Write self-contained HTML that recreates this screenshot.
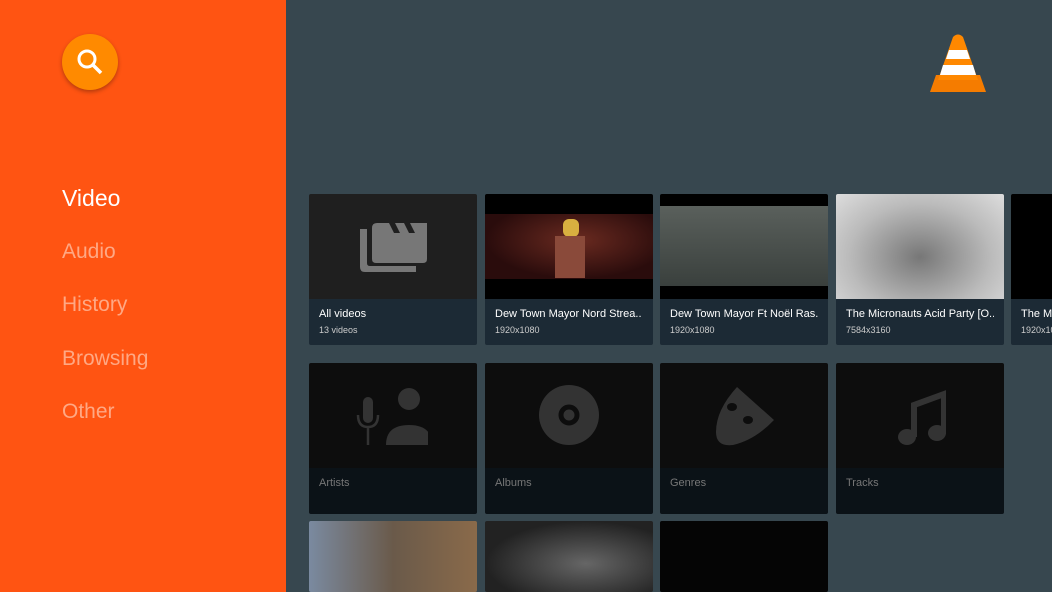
<!DOCTYPE html>
<html><head><meta charset="utf-8"><style>
*{margin:0;padding:0;box-sizing:border-box}
body{width:1052px;height:592px;overflow:hidden;background:#37474f;font-family:"Liberation Sans",sans-serif;position:relative}
.side{position:absolute;left:0;top:0;width:286px;height:592px;background:#ff5412}
.srch{position:absolute;left:62px;top:34px;width:56px;height:56px;border-radius:50%;background:#ff8a00;box-shadow:0 2px 4px rgba(0,0,0,.3)}
.nav{position:absolute;left:62px;font-size:21px;color:#ffa884}
.card{position:absolute;width:168px;overflow:hidden;border-radius:2px}
.img{height:105px;background:#1f1f1f;position:relative;overflow:hidden}
.txt{height:46px;background:#1c2a35;padding:9px 10px;color:#fff}
.t1{font-size:11px;white-space:nowrap;overflow:hidden}
.t2{font-size:9px;color:#ccc;margin-top:5px}
.dark .img{background:#0d0d0d}.dark .txt{background:#0b1217;color:#777}
</style></head><body>
<div class="side">
<div class="srch"><svg width="56" height="56" viewBox="0 0 56 56"><circle cx="25" cy="25" r="8" fill="none" stroke="#fff" stroke-width="3"/><path d="M31 31l8 8" stroke="#fff" stroke-width="3.5"/></svg></div>
<div class="nav" style="top:185px;color:#fff;font-size:23px">Video</div>
<div class="nav" style="top:240px">Audio</div>
<div class="nav" style="top:293px">History</div>
<div class="nav" style="top:347px">Browsing</div>
<div class="nav" style="top:400px">Other</div>
</div>
<svg style="position:absolute;left:928px;top:32px" width="60" height="62" viewBox="0 0 60 62"><path d="M2 60l6-17h44l6 17z" fill="#f57c00"/><path d="M25 5q5-5 10 0l15 43H10z" fill="#ff8800"/><path d="M21 18h18l3 9H18z" fill="#fff"/><path d="M15 33h30l3 10H12z" fill="#fff"/></svg>

<div class="card" style="left:309px;top:194px"><div class="img"><svg style="position:absolute;left:50px;top:25px" width="70" height="56" viewBox="0 0 70 56"><path d="M1 10h7v34q0 3 3 3h46v6H6q-5 0-5-5z" fill="#777"/><path d="M13 9q0-5 5-5h50v36q0 4-4 4H17q-4 0-4-4z" fill="#777"/><path d="M30 4l5 10h6L36 4zM45 4l5 10h6L51 4z" fill="#1f1f1f"/></svg></div><div class="txt"><div class="t1">All videos</div><div class="t2">13 videos</div></div></div>
<div class="card" style="left:485px;top:194px"><div class="img" style="background:#000"><div style="position:absolute;left:0;top:20px;width:168px;height:65px;background:radial-gradient(ellipse at 55% 40%,#6a2a20,#2a0c0c 70%)"></div><div style="position:absolute;left:78px;top:25px;width:16px;height:18px;border-radius:6px;background:#d8b040"></div><div style="position:absolute;left:70px;top:42px;width:30px;height:42px;background:#8a4a3a"></div></div><div class="txt"><div class="t1">Dew Town Mayor Nord Strea..</div><div class="t2">1920x1080</div></div></div>
<div class="card" style="left:660px;top:194px"><div class="img" style="background:#000"><div style="position:absolute;left:0;top:12px;width:168px;height:80px;background:linear-gradient(#5a605c,#3a403d)"></div></div><div class="txt"><div class="t1">Dew Town Mayor Ft Noël Ras..</div><div class="t2">1920x1080</div></div></div>
<div class="card" style="left:836px;top:194px"><div class="img" style="background:radial-gradient(ellipse at 50% 60%,#777,#bbb 60%,#ddd)"></div><div class="txt"><div class="t1">The Micronauts Acid Party [O..</div><div class="t2">7584x3160</div></div></div>
<div class="card" style="left:1011px;top:194px"><div class="img" style="background:#000"></div><div class="txt"><div class="t1">The Micronauts</div><div class="t2">1920x1080</div></div></div>

<div class="card dark" style="left:309px;top:363px"><div class="img"><svg style="position:absolute;left:47px;top:20px" width="72" height="64" viewBox="0 0 72 64"><circle cx="53" cy="16" r="11" fill="#333"/><path d="M30 62q0-20 23-20t23 20z" fill="#333"/><rect x="7" y="14" width="10" height="26" rx="5" fill="#333"/><path d="M2 32q0 12 10 12t10-12M12 44v18" stroke="#333" stroke-width="2.5" fill="none"/></svg></div><div class="txt"><div class="t1">Artists</div></div></div>
<div class="card dark" style="left:485px;top:363px"><div class="img"><svg style="position:absolute;left:54px;top:22px" width="60" height="60"><circle cx="30" cy="30" r="30" fill="#333"/><circle cx="30" cy="30" r="8" fill="none" stroke="#0d0d0d" stroke-width="5"/></svg></div><div class="txt"><div class="t1">Albums</div></div></div>
<div class="card dark" style="left:660px;top:363px"><div class="img"><svg style="position:absolute;left:55px;top:22px" width="60" height="62" viewBox="0 0 60 62"><path d="M22 2L59 35Q40 55 18 60Q1 62 1 47Q1 25 22 2z" fill="#333"/><ellipse cx="17" cy="22" rx="5" ry="4" fill="#0d0d0d"/><ellipse cx="33" cy="35" rx="5" ry="4" fill="#0d0d0d"/></svg></div><div class="txt"><div class="t1">Genres</div></div></div>
<div class="card dark" style="left:836px;top:363px"><div class="img"><svg style="position:absolute;left:60px;top:22px" width="50" height="62" viewBox="0 0 50 62"><path d="M18 52V20L48 9v40" stroke="#333" stroke-width="6" fill="none"/><ellipse cx="11" cy="52" rx="9" ry="8" fill="#333"/><ellipse cx="41" cy="48" rx="9" ry="8" fill="#333"/></svg></div><div class="txt"><div class="t1">Tracks</div></div></div>

<div class="card" style="left:309px;top:521px;height:71px;background:linear-gradient(90deg,#7a8aa0,#6a5a4a 50%,#8a6a4a)"></div>
<div class="card" style="left:485px;top:521px;height:71px;background:radial-gradient(ellipse at 60% 60%,#666,#222 70%)"></div>
<div class="card" style="left:660px;top:521px;height:71px;background:#050505"></div>
</body></html>
